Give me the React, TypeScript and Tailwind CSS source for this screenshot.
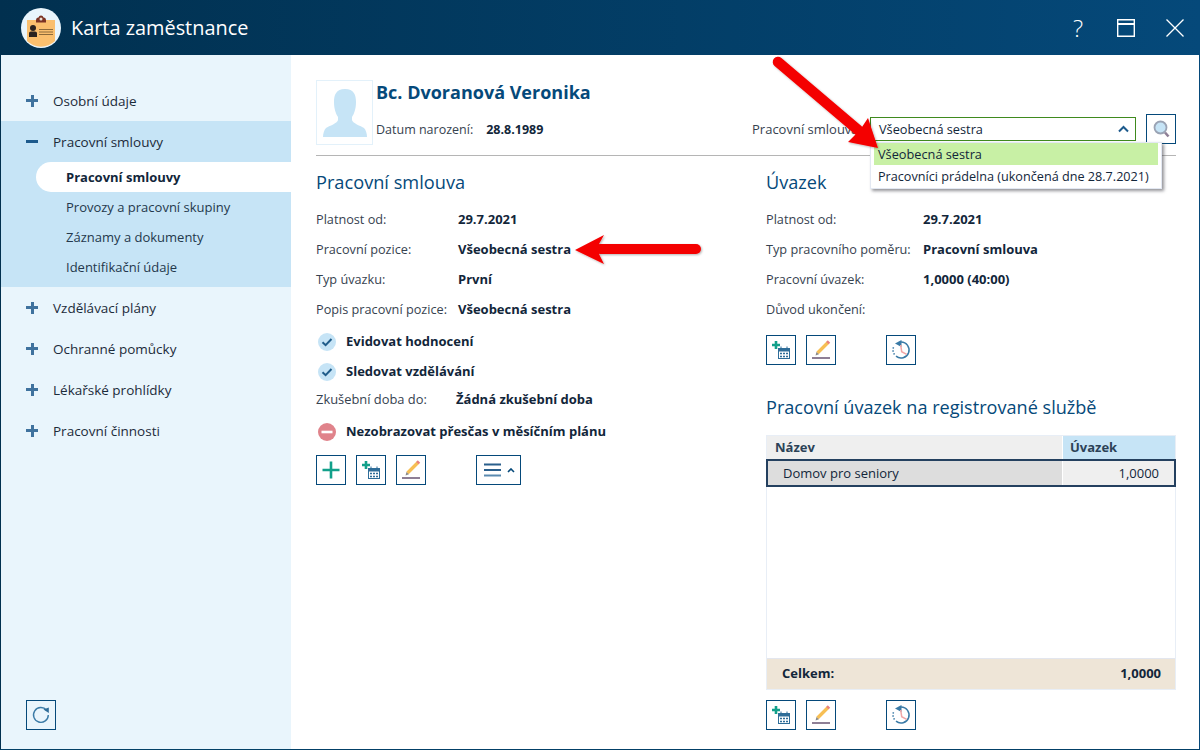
import React from "react";

function IconBtn({ children, className = "" }: { children: React.ReactNode; className?: string }) {
  return (
    <div className={`w-[30px] h-[30px] border border-[#05497a] flex items-center justify-center shrink-0 bg-transparent ${className}`}>
      {children}
    </div>
  );
}

const PlusIcon = () => (
  <svg width="18" height="18" viewBox="0 0 18 18"><path d="M9 0.5V17.500M0.5 9H17.500" stroke="#12a08a" strokeWidth="2.6" /></svg>
);
const AddCal = () => (
  <svg width="26" height="26" viewBox="0 0 26 26">
    <path d="M8 4V12M4 8H12" stroke="#12a08a" strokeWidth="2.6" />
    <rect x="10.5" y="11.500" width="11" height="10" fill="#fff" stroke="#2f6d98" strokeWidth="1" />
    <rect x="10" y="11" width="12" height="3.500" fill="#2f6d98" />
    <path d="M13 9.500V12M19 9.500V12" stroke="#2f6d98" />
    <path d="M12 16.500h2M15 16.500h2M18 16.500h2M12 19.500h2M15 19.500h2M18 19.500h2" stroke="#2f6d98" strokeWidth="1.6" />
  </svg>
);
const Pencil = () => (
  <svg width="26" height="26" viewBox="0 0 26 26">
    <path d="M9.500 16L20 5.500" stroke="#f7bf55" strokeWidth="3.400" />
    <path d="M19.400 6.100L21 4.500" stroke="#e98080" strokeWidth="3.400" />
    <path d="M7.600 18.400L8.400 15L11 17.200Z" fill="#8a8a8a" />
    <rect x="4" y="20" width="18" height="2" fill="#8e7f96" />
  </svg>
);
const History = () => (
  <svg width="26" height="26" viewBox="0 0 26 26">
    <path d="M13 5A8 8 0 1 1 8 19.200" fill="none" stroke="#3a7aa6" strokeWidth="1.500" />
    <path d="M6.500 17.500A8 8 0 0 1 5.800 9.500" fill="none" stroke="#3a7aa6" strokeWidth="1.500" strokeDasharray="1.500 1.500" />
    <path d="M7 6.500L13.500 3V10Z" fill="#3a7aa6" />
    <path d="M12.700 8L13.700 14.700L18.700 17.300" fill="none" stroke="#f2a6a6" strokeWidth="1.500" />
  </svg>
);
const Refresh = () => (
  <svg width="20" height="20" viewBox="0 0 20 20">
    <path d="M15.600 5.200A7.400 7.400 0 1 0 17.300 10" fill="none" stroke="#3a7aa6" strokeWidth="1.400" />
    <path d="M12.400 4.400L17.800 2.600V8Z" fill="#2f6d98" />
  </svg>
);
const Magnifier = () => (
  <svg width="22" height="22" viewBox="0 0 22 22">
    <path d="M15 14.500L18.500 18.500" stroke="#8e7f96" strokeWidth="2.600" />
    <circle cx="10.500" cy="9.500" r="6" fill="#c6e4f6" stroke="#9aa3b4" strokeWidth="1.800" />
  </svg>
);
const Menu = () => (
  <div className="w-[45px] h-[30px] border border-[#05497a] flex items-center pl-[7px] gap-[6px] shrink-0">
    <svg width="17" height="14" viewBox="0 0 17 14"><path d="M0 1.500H17M0 7H17" stroke="#2a5f8c" strokeWidth="2" /><path d="M0 12.500H17" stroke="#5a8ab0" strokeWidth="2" /></svg>
    <svg width="8" height="5" viewBox="0 0 8 5"><path d="M1 4L4 1L7 4" fill="none" stroke="#05497a" strokeWidth="1.600" /></svg>
  </div>
);

const CheckIcon = () => (
  <svg width="18" height="18" viewBox="0 0 18 18" className="shrink-0">
    <circle cx="9" cy="9" r="9" fill="#c6e4f6" />
    <path d="M4.500 9.200L7.600 12.200L13.500 6" fill="none" stroke="#1f5c8a" strokeWidth="2" />
  </svg>
);
const MinusIcon = () => (
  <svg width="18" height="18" viewBox="0 0 18 18" className="shrink-0">
    <circle cx="9" cy="9" r="9" fill="#e0838b" />
    <rect x="3.500" y="7.700" width="11" height="2.600" fill="#fff" />
  </svg>
);

function NavTop({ label, minus }: { label: string; minus?: boolean }) {
  return (
    <div className="h-[41px] flex items-center pl-[25px] text-[13.5px] text-[#1c2b3a]">
      <span className="w-[12px] h-[12px] relative shrink-0 mr-[15px]">
        <span className={`absolute left-0 right-0 top-[4.5px] h-[3px] ${minus ? "bg-[#1d5a8c]" : "bg-[#3f729e]"}`} />
        {!minus && <span className="absolute top-0 bottom-0 left-[4.5px] w-[3px] bg-[#3f729e]" />}
      </span>
      <span className="pt-[2px]">{label}</span>
    </div>
  );
}

function SubNav({ label }: { label: string }) {
  return <div className="h-[30px] flex items-center pt-[2px]">{label}</div>;
}

function Row({ label, value, w }: { label: string; value: string; w: string }) {
  return (
    <div className="h-[30px] flex items-center text-[13px]">
      <span className={`${w} shrink-0 text-[12.7px] text-[#36424f]`}>{label}</span>
      <span className="font-bold text-[#12263a]">{value}</span>
    </div>
  );
}

function Flag({ icon, text }: { icon: React.ReactNode; text: string }) {
  return (
    <div className="h-[30px] flex items-center pl-[2px] gap-[10px] text-[13px] font-bold text-[#12263a]">
      {icon}
      <span>{text}</span>
    </div>
  );
}

export default function App() {
  return (
    <div className="w-[1200px] h-[750px] relative overflow-hidden flex flex-col bg-white text-[#12263a]" style={{ fontFamily: '"Open Sans", "Noto Sans", sans-serif' }}>
      <header className="h-[55px] shrink-0 flex items-center bg-gradient-to-r from-[#01304f] to-[#05497a] pl-[21px] pr-[16px] text-white">
        <svg width="40" height="40" viewBox="0 0 40 40" className="shrink-0">
          <circle cx="20" cy="20" r="20" fill="#e9f5fc" />
          <path d="M6 12H34V33A20 20 0 0 1 6 33Z" fill="#fabf6e" />
          <path d="M15 12.500Q15 9.500 17.500 9.500Q18 7.500 20 7.500Q22 7.500 22.500 9.500Q25 9.500 25 12.500V14.500H15Z" fill="#7b3324" />
          <circle cx="20" cy="11" r="1.500" fill="#e9e1d8" />
          <circle cx="12" cy="20" r="3" fill="#2a2320" />
          <path d="M8 29V25Q8 23.500 10 23.500H14Q16 23.500 16 25V29Z" fill="#2a2320" />
          <path d="M18 21.500H32M18 24H32M18 26.500H32" stroke="#8c6a3a" strokeWidth="1" />
        </svg>
        <span className="ml-[10px] text-[19.9px]">Karta zaměstnance</span>
        <div className="ml-auto flex items-center">
          <span className="text-[24px] font-light leading-none mr-[34px]">?</span>
          <svg width="18" height="18" viewBox="0 0 18 18" className="mr-[31px]"><path d="M0.700 0.700H17.300V17.300H0.700Z" fill="none" stroke="#fff" strokeWidth="1.400" /><path d="M1 5H17" stroke="#fff" strokeWidth="2" /></svg>
          <svg width="18" height="18" viewBox="0 0 18 18"><path d="M0.500 0.500L17.500 17.500M17.500 0.500L0.500 17.500" stroke="#fff" strokeWidth="1.300" /></svg>
        </div>
      </header>

      <div className="flex-1 flex min-h-0 border-l border-l-[#01304f] border-r border-r-[#05497a] border-b border-b-[#034067]">
        <aside className="w-[290px] shrink-0 bg-[#e9f5fc] pt-[25px] pb-[19px] flex flex-col">
          <NavTop label="Osobní údaje" />
          <div className="bg-[#c6e4f6] h-[166px]">
            <NavTop label="Pracovní smlouvy" minus />
            <div className="ml-[35px] h-[30px] bg-white rounded-l-[15px] flex items-center pl-[30px] pt-[2px] text-[13px] font-bold text-[#12263a]">Pracovní smlouvy</div>
            <div className="pl-[65px] text-[13px] text-[#24384c]">
              <SubNav label="Provozy a pracovní skupiny" />
              <SubNav label="Záznamy a dokumenty" />
              <SubNav label="Identifikační údaje" />
            </div>
          </div>
          <NavTop label="Vzdělávací plány" />
          <NavTop label="Ochranné pomůcky" />
          <NavTop label="Lékařské prohlídky" />
          <NavTop label="Pracovní činnosti" />
          <div className="mt-auto pl-[25px]">
            <IconBtn><Refresh /></IconBtn>
          </div>
        </aside>

        <main className="flex-1 min-w-0 flex flex-col pl-[25px] pr-[23px] pt-[25px] pb-[19px]">
          <div className="h-[76px] shrink-0 border-b border-[#b5b5b5] flex">
            <div className="w-[57px] h-[65px] border border-[#e3f1fa] flex items-center justify-center shrink-0">
              <svg width="44" height="48" viewBox="0 0 44 48">
                <path d="M22 0C13 0 11 6 11 13C11 20 13 25 15 28V31C15 34 6 37 3 39C1 41 0 45 0 48H44C44 45 43 41 41 39C38 37 29 34 29 31V28C31 25 33 20 33 13C33 6 31 0 22 0Z" fill="#c6e4f6" />
              </svg>
            </div>
            <div className="ml-[2px] flex-1 min-w-0">
              <div className="h-[24px] pl-[1px] flex items-center text-[18px] font-bold text-[#05497a]">Bc. Dvoranová Veronika</div>
              <div className="mt-[13px] h-[26px] flex items-center text-[12.5px] pl-[1px]">
                <span className="text-[#36424f]">Datum narození:</span>
                <span className="ml-[13px] font-bold">28.8.1989</span>
                <span className="ml-auto text-[13px] text-[#36424f] mr-[8px]">Pracovní smlouva:</span>
                <div className="w-[266px] h-[24px] mb-[2px] border border-[#3f8a1e] flex items-center pl-[8px] pr-[6px] text-[12.75px] text-[#12263a] bg-white shrink-0">
                  <span className="pt-[2px]">Všeobecná sestra</span>
                  <svg width="11" height="8" viewBox="0 0 11 8" className="ml-auto"><path d="M1 6.500L5.500 2L10 6.500" fill="none" stroke="#1d5a8c" strokeWidth="2" /></svg>
                </div>
                <IconBtn className="ml-[10px] mt-[-2px]"><Magnifier /></IconBtn>
              </div>
            </div>
          </div>

          <div className="flex-1 min-h-0 flex">
            <section className="w-[450px] shrink-0 flex flex-col pt-[12px]">
              <h2 className="text-[18.2px] leading-[28px] font-normal text-[#05497a] mb-[9px]">Pracovní smlouva</h2>
              <Row label="Platnost od:" value="29.7.2021" w="w-[142px]" />
              <Row label="Pracovní pozice:" value="Všeobecná sestra" w="w-[142px]" />
              <Row label="Typ úvazku:" value="První" w="w-[142px]" />
              <Row label="Popis pracovní pozice:" value="Všeobecná sestra" w="w-[142px]" />
              <div className="mt-[2px]" />
              <Flag icon={<CheckIcon />} text="Evidovat hodnocení" />
              <Flag icon={<CheckIcon />} text="Sledovat vzdělávání" />
              <div className="h-[26px] flex items-center text-[13px]">
                <span className="w-[140px] text-[12.9px] text-[#36424f]">Zkušební doba do:</span>
                <span className="font-bold">Žádná zkušební doba</span>
              </div>
              <div className="h-[38px] flex items-center pl-[2px] gap-[10px] text-[13px] font-bold"><MinusIcon /><span>Nezobrazovat přesčas v měsíčním plánu</span></div>
              <div className="flex mt-[4px] gap-[10px]">
                <IconBtn><PlusIcon /></IconBtn>
                <IconBtn><AddCal /></IconBtn>
                <IconBtn><Pencil /></IconBtn>
                <div className="w-[30px]" />
                <Menu />
              </div>
            </section>

            <section className="flex-1 min-w-0 flex flex-col pt-[12px]">
              <h2 className="text-[18.1px] leading-[28px] font-normal text-[#05497a] mb-[9px]">Úvazek</h2>
              <Row label="Platnost od:" value="29.7.2021" w="w-[157px]" />
              <Row label="Typ pracovního poměru:" value="Pracovní smlouva" w="w-[157px]" />
              <Row label="Pracovní úvazek:" value="1,0000 (40:00)" w="w-[157px]" />
              <Row label="Důvod ukončení:" value="" w="w-[157px]" />
              <div className="flex mt-[10px] gap-[10px]">
                <IconBtn><AddCal /></IconBtn>
                <IconBtn><Pencil /></IconBtn>
                <div className="w-[30px]" />
                <IconBtn><History /></IconBtn>
              </div>
              <h2 className="text-[18.1px] leading-[28px] font-normal text-[#05497a] mt-[28px] mb-[14px]">Pracovní úvazek na registrované službě</h2>
              <div className="flex-1 min-h-0 border border-[#e8eef6] flex flex-col">
                <div className="h-[23px] flex text-[13px] font-bold text-[#2c4257] shrink-0">
                  <div className="flex-1 bg-[#efefef] flex items-center pl-[8px]">Název</div>
                  <div className="w-[112px] bg-[#c6e4f6] ml-[1px] flex items-center pl-[7px]">Úvazek</div>
                </div>
                <div className="h-[28px] flex text-[13px] border-2 border-[#24405f] shrink-0 -mx-[1px]">
                  <div className="flex-1 bg-[#dddddd] flex items-center pl-[15px] pt-[1px]">Domov pro seniory</div>
                  <div className="w-[111px] ml-[1px] bg-[#efefef] flex items-center justify-end pr-[15px] pt-[1px]">1,0000</div>
                </div>
                <div className="flex-1" />
                <div className="h-[31px] shrink-0 bg-[#eee5d7] border-t border-[#e3e6ee] flex items-center justify-between pl-[15px] pr-[14px] text-[13px] font-bold text-[#12263a]">
                  <span>Celkem:</span>
                  <span>1,0000</span>
                </div>
              </div>
              <div className="flex mt-[10px] gap-[10px] shrink-0">
                <IconBtn><AddCal /></IconBtn>
                <IconBtn><Pencil /></IconBtn>
                <div className="w-[30px]" />
                <IconBtn><History /></IconBtn>
              </div>
            </section>
          </div>
        </main>
      </div>

      {/* open dropdown list */}
      <div className="absolute left-[870px] top-[142px] w-[292px] h-[47px] bg-white border border-[#e3e8f2] shadow-[2px_2px_3px_rgba(60,60,70,0.55)] px-[3px] text-[12.75px] text-[#12263a]">
        <div className="h-[22px] bg-[#c8f0a5] flex items-center pl-[4px] pt-[1px]">Všeobecná sestra</div>
        <div className="h-[22px] flex items-center pl-[4px] pt-[1px] whitespace-nowrap text-[12.65px]">Pracovníci prádelna (ukončená dne 28.7.2021)</div>
      </div>

      {/* annotation arrows */}
      <svg className="absolute left-0 top-0 pointer-events-none" width="1200" height="750" viewBox="0 0 1200 750">
        <defs>
          <filter id="sh" x="-10%" y="-10%" width="130%" height="130%">
            <feDropShadow dx="1" dy="1" stdDeviation="1.200" floodColor="#000" floodOpacity="0.3" />
          </filter>
        </defs>
        <g filter="url(#sh)">
          <path d="M778 62L858 130" stroke="#f40000" strokeWidth="10.500" strokeLinecap="round" fill="none" />
          <path d="M878 148L848 142L855 135L862 127L868 118Z" fill="#f40000" />
          <path d="M600 249H696" stroke="#f40000" strokeWidth="10" strokeLinecap="round" fill="none" />
          <path d="M575 250L604 235L599 244V254L604 264Z" fill="#f40000" />
        </g>
      </svg>
    </div>
  );
}
